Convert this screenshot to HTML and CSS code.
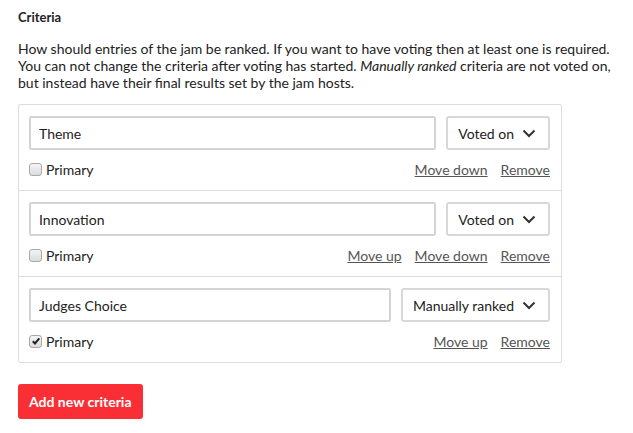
FILE: index.html
```html
<!DOCTYPE html>
<html>
<head>
<meta charset="utf-8">
<link rel="stylesheet" href="styles.css">
</head>
<body>
<div class="page">
  <h3 class="title">Criteria</h3>
  <p class="desc">How should entries of the jam be ranked. If you want to have voting then at least one is required. You can not change the criteria after voting has started. <em>Manually ranked</em> criteria are not voted on, but instead have their final results set by the jam hosts.</p>
  <div class="criteria">
    <div class="row">
      <div class="fields">
        <input class="text" type="text" value="Theme">
        <div class="select"><span>Voted on</span><svg width="14" height="9" viewBox="0 0 14 9"><path d="M1.5 1.5 L7 7 L12.5 1.5" fill="none" stroke="#333" stroke-width="2"/></svg></div>
      </div>
      <div class="opts">
        <label class="primary"><span class="box"></span> Primary</label>
        <div class="links"><a href="#">Move down</a><a href="#">Remove</a></div>
      </div>
    </div>
    <div class="row">
      <div class="fields">
        <input class="text" type="text" value="Innovation">
        <div class="select"><span>Voted on</span><svg width="14" height="9" viewBox="0 0 14 9"><path d="M1.5 1.5 L7 7 L12.5 1.5" fill="none" stroke="#333" stroke-width="2"/></svg></div>
      </div>
      <div class="opts">
        <label class="primary"><span class="box"></span> Primary</label>
        <div class="links"><a href="#">Move up</a><a href="#">Move down</a><a href="#">Remove</a></div>
      </div>
    </div>
    <div class="row">
      <div class="fields">
        <input class="text" type="text" value="Judges Choice">
        <div class="select"><span>Manually ranked</span><svg width="14" height="9" viewBox="0 0 14 9"><path d="M1.5 1.5 L7 7 L12.5 1.5" fill="none" stroke="#333" stroke-width="2"/></svg></div>
      </div>
      <div class="opts">
        <label class="primary"><span class="box"><svg width="10" height="10" viewBox="0 0 10 10"><path d="M1.8 5.2 L4 7.5 L8.3 2.3" fill="none" stroke="#222" stroke-width="2"/></svg></span> Primary</label>
        <div class="links"><a href="#">Move up</a><a href="#">Remove</a></div>
      </div>
    </div>
  </div>
  <button class="add">Add new criteria</button>
</div>
</body>
</html>
```
FILE: styles.css
```css
html, body {
  margin: 0;
  padding: 0;
  background: #fff;
}
body {
  font-family: Lato, "Open Sans", sans-serif;
  color: #222;
  font-size: 14px;
}
.page {
  padding: 8px 18px;
  width: 597px;
}
.title {
  font-size: 13px;
  font-weight: bold;
  margin: 0 0 14px;
  line-height: 18px;
}
.desc {
  margin: 0 0 13px;
  line-height: 17px;
  font-size: 14px;
}
.criteria {
  width: 542px;
  border: 1px solid #ddd;
  border-radius: 2px;
}
.row {
  padding: 11px 11px 10px 10px;
  border-top: 1px solid #ddd;
}
.row:first-child {
  border-top: none;
}
.fields {
  display: flex;
  gap: 10px;
}
.text {
  flex: 1;
  min-width: 0;
  height: 34px;
  box-sizing: border-box;
  border: 2px solid #d4d4d4;
  border-radius: 2px;
  padding: 0 8px;
  font-family: Lato, sans-serif;
  font-size: 14px;
  color: #222;
  outline: none;
}
.select {
  display: flex;
  align-items: center;
  gap: 8px;
  height: 34px;
  box-sizing: border-box;
  border: 2px solid #d8d8d8;
  border-radius: 3px;
  padding: 0 12px 0 10px;
  font-size: 14px;
  color: #222;
}
.opts {
  display: flex;
  justify-content: space-between;
  align-items: center;
  margin-top: 8px;
  height: 22px;
}
.primary {
  display: flex;
  align-items: center;
  gap: 4px;
  font-size: 14px;
}
.box {
  display: flex;
  align-items: center;
  justify-content: center;
  width: 11px;
  height: 11px;
  border: 1px solid #a8a8a8;
  border-radius: 3px;
  background: linear-gradient(#f4f4f4, #dcdcdc);
}
.links {
  display: flex;
  gap: 13px;
}
.links a {
  color: #555;
  text-decoration: underline;
  font-size: 14px;
}
.add {
  margin-top: 21px;
  background: #fa2f35;
  color: #fff;
  border: none;
  border-radius: 3px;
  height: 35px;
  padding: 0 11px;
  font-family: Lato, sans-serif;
  font-weight: bold;
  font-size: 14px;
}
```
